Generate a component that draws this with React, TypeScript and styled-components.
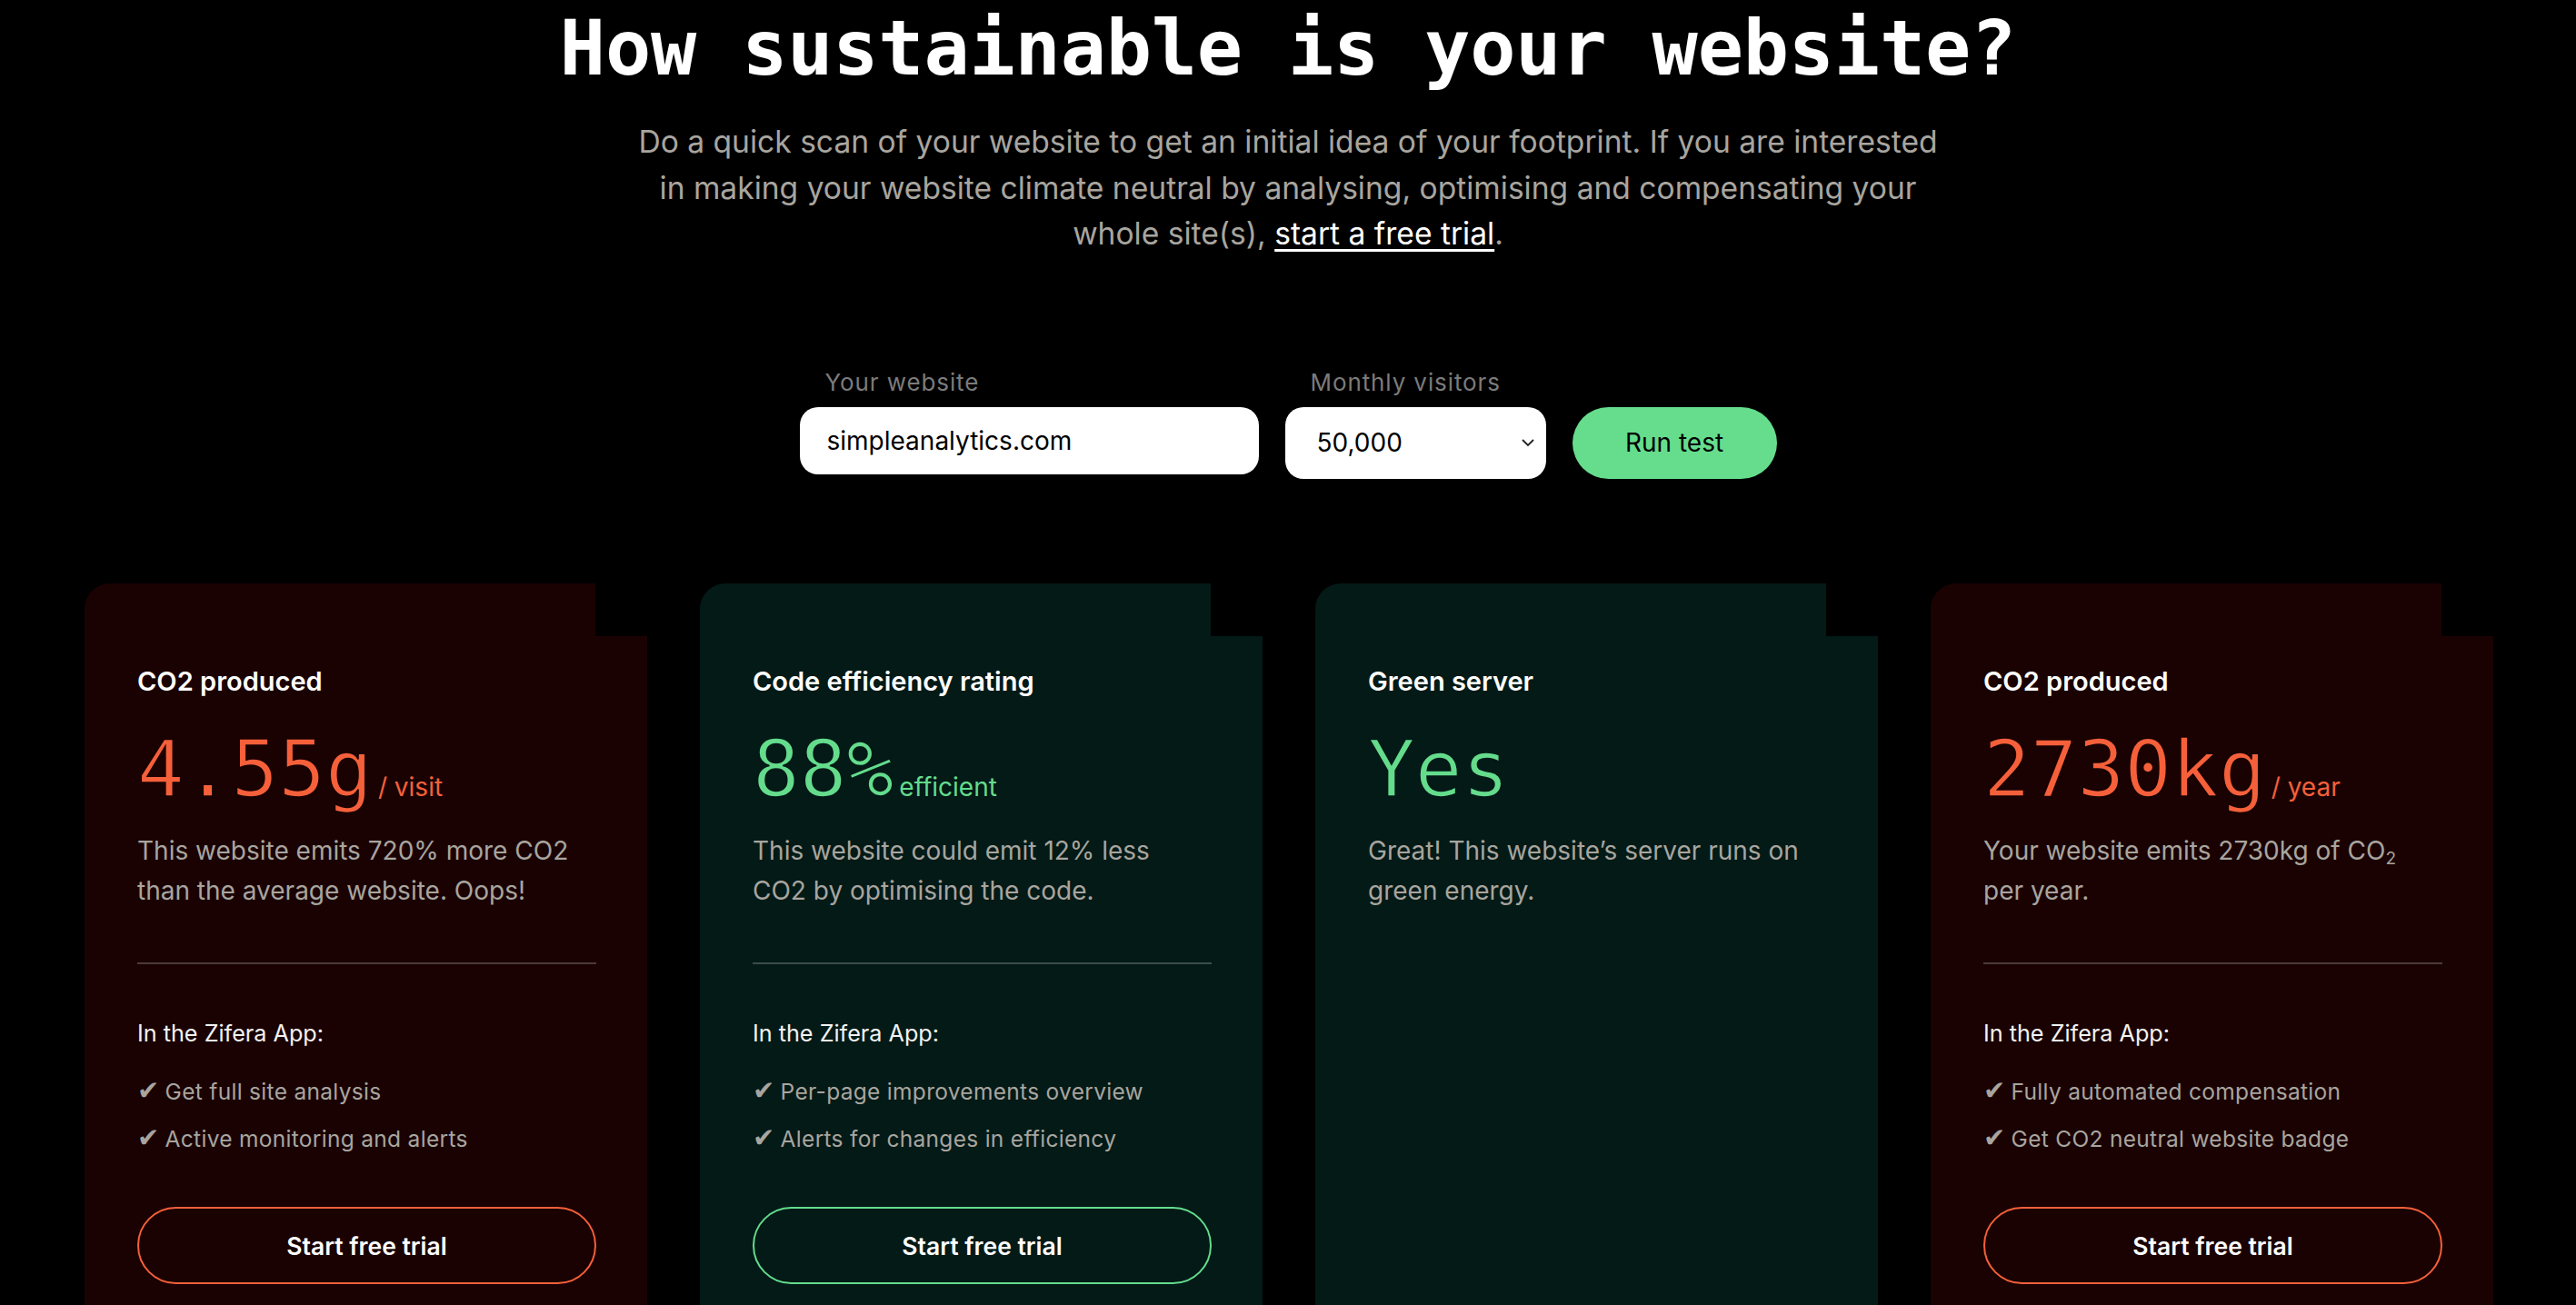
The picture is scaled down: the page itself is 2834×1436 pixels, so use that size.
import React from "react";
import styled, { createGlobalStyle } from "styled-components";

const GlobalStyle = createGlobalStyle`
  html, body {
    margin: 0;
    padding: 0;
    background: #000;
  }
  body {
    font-family: Inter, "Noto Sans", "Liberation Sans", sans-serif;
    color: #fff;
  }
  * { box-sizing: border-box; }
`;

const Page = styled.main`
  display: flex;
  flex-direction: column;
  align-items: center;
  padding-top: 4px;
  min-height: 1436px;
  overflow: hidden;
`;

const Title = styled.h1`
  margin: 0;
  font-family: "DejaVu Sans Mono", "Liberation Mono", monospace;
  font-weight: 700;
  font-size: 83.5px;
  line-height: 99px;
  color: #fff;
  letter-spacing: -0.2px;
`;

const Intro = styled.p`
  margin: 28px 0 0;
  max-width: 1458px;
  text-align: center;
  font-size: 33.6px;
  line-height: 50.5px;
  color: #a8a59f;
`;

const TrialLink = styled.a`
  color: #fff;
  text-decoration: underline;
  text-decoration-thickness: 3px;
  text-underline-offset: 5px;
`;

const Form = styled.form`
  margin-top: 123px;
  display: grid;
  grid-template-columns: 505px 287px 225px;
  column-gap: 29px;
  row-gap: 13px;
  align-items: start;
`;

const Label = styled.label<{ $col: number }>`
  grid-row: 1;
  grid-column: ${(p) => p.$col};
  padding-left: 28px;
  font-size: 26px;
  letter-spacing: 0.9px;
  line-height: 29.4px;
  color: #7b7b7b;
`;

const TextInput = styled.input`
  grid-row: 2;
  grid-column: 1;
  width: 100%;
  height: 74px;
  border: none;
  outline: none;
  border-radius: 20px;
  background: #fff;
  padding: 0 30px;
  font-family: inherit;
  font-size: 28px;
  color: #000;
`;

const SelectWrap = styled.div`
  grid-row: 2;
  grid-column: 2;
  position: relative;
  height: 79px;
`;

const Select = styled.select`
  appearance: none;
  -webkit-appearance: none;
  width: 100%;
  height: 100%;
  border: none;
  outline: none;
  border-radius: 20px;
  background: #fff;
  padding: 0 40px 0 35px;
  font-family: inherit;
  font-size: 28px;
  color: #000;
`;

const Chevron = styled.svg`
  position: absolute;
  right: 12px;
  top: 50%;
  transform: translateY(-50%);
  pointer-events: none;
`;

const RunButton = styled.button`
  grid-row: 2;
  grid-column: 3;
  height: 79px;
  border: none;
  border-radius: 40px;
  background: #66dd8c;
  color: #000;
  font-family: inherit;
  font-size: 28px;
  cursor: pointer;
`;

const Cards = styled.section`
  margin-top: 115px;
  width: 100%;
  padding: 0 91px 0 93px;
  display: grid;
  grid-template-columns: repeat(4, 1fr);
  column-gap: 58px;
  align-items: stretch;
`;

type Tone = "red" | "green";

const toneBg: Record<Tone, string> = { red: "#1a0203", green: "#031a17" };
const toneAccent: Record<Tone, string> = { red: "#f5603a", green: "#64dc8c" };

const Card = styled.article<{ $tone: Tone }>`
  position: relative;
  background: ${(p) => toneBg[p.$tone]};
  border-top-left-radius: 28px;
  padding: 88px 56px 80px 58px;
  display: flex;
  flex-direction: column;
  &::before {
    content: "";
    position: absolute;
    top: 0;
    right: 0;
    width: 57px;
    height: 58px;
    background: #000;
  }
`;

const CardTitle = styled.h2`
  margin: 0;
  font-size: 29px;
  font-weight: 600;
  line-height: 39.2px;
  color: #fff;
`;

const BigValue = styled.div<{ $tone: Tone }>`
  margin-top: 35px;
  font-family: "DejaVu Sans Mono", "Liberation Mono", monospace;
  font-size: 86px;
  line-height: 84px;
  height: 84px;
  white-space: nowrap;
  color: ${(p) => toneAccent[p.$tone]};
  -webkit-text-stroke: 1.6px ${(p) => toneBg[p.$tone]};
`;

const Unit = styled.span`
  font-family: Inter, "Noto Sans", sans-serif;
  font-size: 28px;
  margin-left: 6px;
  -webkit-text-stroke: 0;
`;

const Description = styled.p`
  margin: 26px 0 0;
  max-width: 488px;
  font-size: 28px;
  line-height: 44px;
  color: #a8a59f;
  sub {
    font-size: 19px;
    vertical-align: -5px;
    line-height: 0;
  }
`;

const Divider = styled.hr`
  margin: 57px 0 0;
  border: none;
  height: 2px;
  background: rgba(255, 255, 255, 0.22);
`;

const AppHeading = styled.p`
  margin: 59px 0 0;
  font-size: 25.2px;
  line-height: 34.3px;
  color: #f2f2f2;
`;

const FeatureList = styled.ul`
  margin: 21px 0 0;
  padding: 0;
  list-style: none;
`;

const Feature = styled.li`
  font-size: 24.5px;
  line-height: 51px;
  color: #a8a59f;
  letter-spacing: 0.3px;
  &::before {
    content: "✔";
    font-family: "DejaVu Sans", sans-serif;
    font-size: 29px;
    margin-right: 6px;
  }
`;

const TrialButton = styled.button<{ $tone: Tone }>`
  margin-top: 49px;
  height: 85px;
  width: 100%;
  border-radius: 43px;
  border: 2.5px solid ${(p) => toneAccent[p.$tone]};
  background: transparent;
  color: #fff;
  font-family: inherit;
  font-size: 26.5px;
  font-weight: 600;
  cursor: pointer;
`;

type CardData = {
  tone: Tone;
  title: string;
  value: string;
  unit?: string;
  description: React.ReactNode;
  features?: string[];
};

const cards: CardData[] = [
  {
    tone: "red",
    title: "CO2 produced",
    value: "4.55g",
    unit: "/ visit",
    description: "This website emits 720% more CO2 than the average website. Oops!",
    features: ["Get full site analysis", "Active monitoring and alerts"],
  },
  {
    tone: "green",
    title: "Code efficiency rating",
    value: "88%",
    unit: "efficient",
    description: "This website could emit 12% less CO2 by optimising the code.",
    features: ["Per-page improvements overview", "Alerts for changes in efficiency"],
  },
  {
    tone: "green",
    title: "Green server",
    value: "Yes",
    description: "Great! This website’s server runs on green energy.",
  },
  {
    tone: "red",
    title: "CO2 produced",
    value: "2730kg",
    unit: "/ year",
    description: (
      <>
        Your website emits 2730kg of CO<sub>2</sub> per year.
      </>
    ),
    features: ["Fully automated compensation", "Get CO2 neutral website badge"],
  },
];

export default function App() {
  return (
    <>
      <GlobalStyle />
      <Page>
        <Title>How sustainable is your website?</Title>
        <Intro>
          Do a quick scan of your website to get an initial idea of your footprint. If you are interested
          in making your website climate neutral by analysing, optimising and compensating your whole
          site(s), <TrialLink href="#">start a free trial</TrialLink>.
        </Intro>

        <Form onSubmit={(e) => e.preventDefault()}>
          <Label $col={1} htmlFor="site">Your website</Label>
          <Label $col={2} htmlFor="visitors">Monthly visitors</Label>
          <TextInput id="site" defaultValue="simpleanalytics.com" />
          <SelectWrap>
            <Select id="visitors" defaultValue="50000">
              <option value="10000">10,000</option>
              <option value="50000">50,000</option>
              <option value="100000">100,000</option>
            </Select>
            <Chevron width="16" height="10" viewBox="0 0 16 10" fill="none">
              <path d="M2 2 L8 8 L14 2" stroke="#222" strokeWidth="1.8" />
            </Chevron>
          </SelectWrap>
          <RunButton type="submit">Run test</RunButton>
        </Form>

        <Cards>
          {cards.map((c, i) => (
            <Card key={i} $tone={c.tone}>
              <CardTitle>{c.title}</CardTitle>
              <BigValue $tone={c.tone}>
                {c.value}
                {c.unit && <Unit>{c.unit}</Unit>}
              </BigValue>
              <Description>{c.description}</Description>
              {c.features && (
                <>
                  <Divider />
                  <AppHeading>In the Zifera App:</AppHeading>
                  <FeatureList>
                    {c.features.map((f) => (
                      <Feature key={f}>{f}</Feature>
                    ))}
                  </FeatureList>
                  <TrialButton $tone={c.tone}>Start free trial</TrialButton>
                </>
              )}
            </Card>
          ))}
        </Cards>
      </Page>
    </>
  );
}
